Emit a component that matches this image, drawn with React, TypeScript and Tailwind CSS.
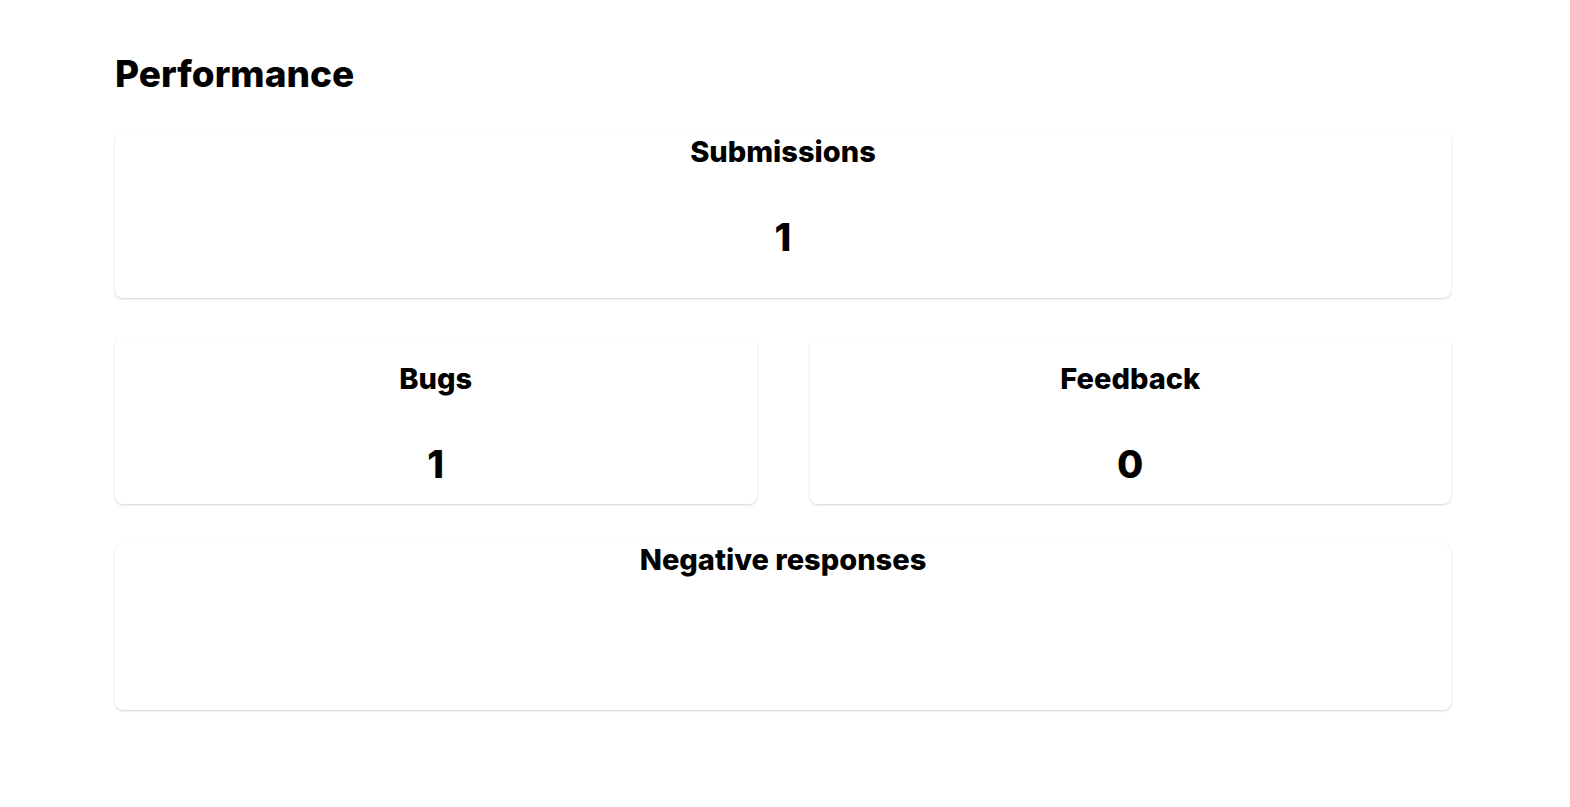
import React from "react";

const Card = ({ title, value, className = "" }: { title: string; value?: string; className?: string }) => (
  <div className={`flex flex-col items-center h-[166px] rounded-lg bg-white shadow-[0_1px_3px_rgba(0,0,0,0.12),0_1px_2px_rgba(0,0,0,0.06)] ${className}`}>
    <h3 className="text-[29px] font-extrabold leading-none">{title}</h3>
    {value !== undefined && <p className="mt-[52px] text-[38px] font-extrabold leading-none">{value}</p>}
  </div>
);

export default function App() {
  return (
    <div className="min-h-screen bg-white text-black" style={{ fontFamily: "Inter, 'Liberation Sans', sans-serif" }}>
      <div className="pl-[115px] pr-[119px] pt-[55px]">
        <h1 className="text-[37px] font-extrabold leading-none">Performance</h1>
        <div className="mt-[40px] flex flex-col gap-[40px]">
          <Card title="Submissions" value="1" className="pt-[5px]" />
          <div className="grid grid-cols-2 gap-[53px]">
            <Card title="Bugs" value="1" className="pt-[26px]" />
            <Card title="Feedback" value="0" className="pt-[26px]" />
          </div>
          <Card title="Negative responses" className="pt-[1px]" />
        </div>
      </div>
    </div>
  );
}
